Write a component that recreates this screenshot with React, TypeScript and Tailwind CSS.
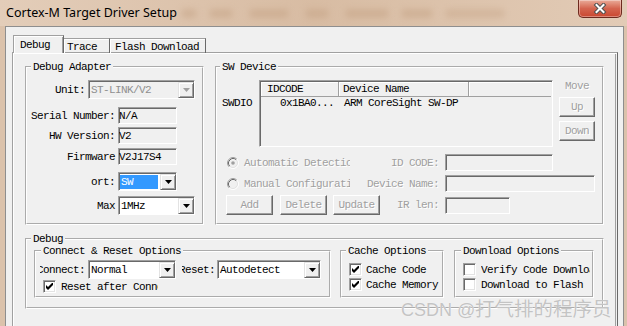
import React from "react";

const T = "font-['Liberation_Mono',monospace] text-[11px] leading-[12px] tracking-[-0.6px]";
const DIS = "text-[#a0a0a0] [text-shadow:1px_1px_0_#ffffff]";
const SUNK =
  "border border-t-[#a0a0a0] border-l-[#a0a0a0] border-b-white border-r-white shadow-[inset_1px_1px_0_#696969]";
const FS = "border-2 border-white [--tw-border-style:groove] [border-style:groove] m-0 p-0 min-w-0";

function Edit({ cls, text }: { cls: string; text?: string }) {
  return (
    <div
      className={`${cls} h-[17px] shrink-0 bg-[#f0f0f0] ${SUNK} flex items-center text-black whitespace-nowrap overflow-hidden`}
    >
      {text}
    </div>
  );
}

function Tri({ color }: { color: string }) {
  return (
    <svg width="7" height="4" viewBox="0 0 7 4">
      <polygon points="0,0 7,0 3.5,4" fill={color} />
    </svg>
  );
}

function Combo({ cls, text, sel, dis }: { cls: string; text: string; sel?: boolean; dis?: boolean }) {
  return (
    <div
      className={`${cls} h-[19px] shrink-0 flex ${SUNK} pt-px pl-px ${dis ? "bg-[#f0f0f0]" : "bg-white"}`}
    >
      <div className="flex-1 min-w-0 flex items-center overflow-hidden whitespace-nowrap">
        {sel ? (
          <span className="bg-[#3399ff] text-white h-[14px] w-[38px] flex items-center pl-px">{text}</span>
        ) : (
          <span className={dis ? "text-[#8f8f8f] pl-px" : "text-black pl-px"}>{text}</span>
        )}
      </div>
      <div className="w-[16px] h-[16px] shrink-0 bg-[#f0f0f0] border border-t-[#e3e3e3] border-l-[#e3e3e3] border-b-[#696969] border-r-[#696969] shadow-[inset_1px_1px_0_#ffffff,inset_-1px_-1px_0_#a0a0a0] flex items-center justify-center">
        <Tri color={dis ? "#a0a0a0" : "#000000"} />
      </div>
    </div>
  );
}

function Check({ on, cls }: { on?: boolean; cls: string }) {
  return (
    <div
      className={`${cls} w-[13px] h-[13px] shrink-0 bg-white border border-t-[#a0a0a0] border-l-[#a0a0a0] border-b-white border-r-white shadow-[inset_1px_1px_0_#696969,inset_-1px_-1px_0_#e3e3e3] flex items-center justify-center`}
    >
      {on && (
        <svg width="7" height="7" viewBox="0 0 7 7">
          <polygon points="0,2 2,4 7,-1 7,2 2,7 0,5" fill="#000000" />
        </svg>
      )}
    </div>
  );
}

function Radio({ on }: { on?: boolean }) {
  return (
    <svg width="12" height="12" viewBox="0 0 12 12" className="shrink-0">
      <circle cx="6" cy="6" r="4.2" fill="#f0f0f0" />
      <path d="M2.11 9.89 A5.5 5.5 0 0 1 9.89 2.11" stroke="#a0a0a0" strokeWidth="1" fill="none" />
      <path d="M9.89 2.11 A5.5 5.5 0 0 1 2.11 9.89" stroke="#ffffff" strokeWidth="1" fill="none" />
      <path d="M2.82 9.18 A4.5 4.5 0 0 1 9.18 2.82" stroke="#696969" strokeWidth="1" fill="none" />
      <path d="M9.18 2.82 A4.5 4.5 0 0 1 2.82 9.18" stroke="#e3e3e3" strokeWidth="1" fill="none" />
      {on && <circle cx="6" cy="6" r="1.8" fill="#a0a0a0" />}
    </svg>
  );
}

function Btn({ cls, children }: { cls: string; children: React.ReactNode }) {
  return (
    <div
      className={`${cls} h-[20px] shrink-0 flex items-center justify-center bg-[#f0f0f0] border border-t-white border-l-white border-b-[#696969] border-r-[#696969] shadow-[inset_-1px_-1px_0_#a0a0a0] ${DIS}`}
    >
      {children}
    </div>
  );
}

function Row({ mt, label, children }: { mt: string; label: string; children: React.ReactNode }) {
  return (
    <div className={`flex items-center ${mt}`}>
      <div className="w-[88px] text-right whitespace-nowrap">{label}</div>
      <div className="ml-[3px]">{children}</div>
    </div>
  );
}

export default function App() {
  return (
    <div className={`relative w-[627px] h-[326px] overflow-hidden bg-[#dbc2ab] flex flex-col text-black ${T}`}>
      {/* title bar */}
      <div className="h-[26px] shrink-0 flex items-start bg-linear-to-r from-[#e3cdb9] via-[#d8bca3] to-[#e2cbb6]">
        <div className="w-[181px] shrink-0 pl-[6px] mt-[5px] font-['Noto_Sans',sans-serif] text-[12.5px] leading-[16px] tracking-normal text-black whitespace-nowrap">
          Cortex-M Target Driver Setup
        </div>
        <div className="flex mt-[9px]">
          <div className="w-[16px] h-[9px] rounded-full bg-[#c4a284] opacity-50 blur-[3px]" />
          <div className="ml-[12px] w-[24px] h-[9px] rounded-full bg-[#c4a284] opacity-50 blur-[3px]" />
          <div className="ml-[16px] w-[40px] h-[9px] rounded-full bg-[#c4a284] opacity-50 blur-[3px]" />
          <div className="ml-[16px] w-[24px] h-[9px] rounded-full bg-[#c4a284] opacity-50 blur-[3px]" />
          <div className="ml-[16px] w-[44px] h-[9px] rounded-full bg-[#c4a284] opacity-50 blur-[3px]" />
          <div className="ml-[12px] w-[32px] h-[9px] rounded-full bg-[#c4a284] opacity-50 blur-[3px]" />
          <div className="ml-[12px] w-[60px] h-[9px] rounded-full bg-[#c4a284] opacity-40 blur-[3px]" />
        </div>
        <div className="ml-auto mr-[5px] w-[44px] h-[18px] rounded-b-[5px] border border-t-0 border-[#6e2a1e] bg-linear-to-b from-[#e9ab99] via-[#d4644f] to-[#c9462f] shadow-[inset_0_0_0_1px_rgba(255,255,255,0.35)] flex items-center justify-center">
          <svg width="14" height="11" viewBox="0 0 14 11">
            <path d="M3.5 2 L10.5 9 M10.5 2 L3.5 9" stroke="#505050" strokeWidth="4" strokeLinecap="square" fill="none" />
            <path d="M3.5 2 L10.5 9 M10.5 2 L3.5 9" stroke="#ffffff" strokeWidth="2" strokeLinecap="square" fill="none" />
          </svg>
        </div>
      </div>

      {/* window body */}
      <div className="ml-[5px] w-[619px] flex-1 min-h-0 bg-[#f0f0f0] border-l border-t border-r border-[#8e8e8e] flex flex-col">
        {/* tabs */}
        <div className="relative z-10 -mb-px mt-[8px] ml-[7px] h-[18px] flex items-end">
          <div className="w-[51px] h-[18px] bg-[#f0f0f0] border-l border-t border-r border-l-[#a0a0a0] border-t-[#a0a0a0] border-r-[#696969] shadow-[inset_1px_1px_0_#ffffff,inset_-1px_0_0_#a0a0a0] pl-[6px] pt-[3px]">
            Debug
          </div>
          <div className="w-[46px] h-[15px] border-t border-r border-t-[#a0a0a0] border-r-[#696969] shadow-[inset_1px_1px_0_#ffffff] pl-[3px] pt-[2px]">
            Trace
          </div>
          <div className="w-[96px] h-[15px] border-t border-r border-t-[#a0a0a0] border-r-[#696969] shadow-[inset_1px_1px_0_#ffffff] pl-[5px] pt-[2px] whitespace-nowrap">
            Flash Download
          </div>
        </div>

        {/* tab page */}
        <div className="ml-[6px] w-[606px] flex-1 border-l border-t border-r border-l-[#a0a0a0] border-t-[#a0a0a0] border-r-[#696969] shadow-[inset_1px_1px_0_#ffffff,inset_-1px_0_0_#f0f0f0,inset_-2px_0_0_#a0a0a0] pl-[12px] pt-[8px]">
          <div className="flex gap-[11px]">
            {/* Debug Adapter */}
            <fieldset className={`w-[179px] h-[164px] ${FS}`}>
              <legend className="ml-[4px] px-[2px]">Debug Adapter</legend>
              <div className="pt-[7px] flex flex-col">
                <div className="flex items-center h-[19px]">
                  <div className="w-[58px] text-right">Unit:</div>
                  <Combo cls="ml-[3px] w-[107px]" text="ST-LINK/V2" dis />
                </div>
                <Row mt="mt-[8px]" label="Serial Number:">
                  <Edit cls="w-[59px]" text="N/A" />
                </Row>
                <Row mt="mt-[3px]" label="HW Version:">
                  <Edit cls="w-[59px]" text="V2" />
                </Row>
                <Row mt="mt-[4px]" label="Firmware">
                  <Edit cls="w-[59px]" text="V2J17S4" />
                </Row>
                <Row mt="mt-[7px]" label="ort:">
                  <Combo cls="w-[59px]" text="SW" sel />
                </Row>
                <Row mt="mt-[5px]" label="Max">
                  <Combo cls="w-[77px]" text="1MHz" />
                </Row>
              </div>
            </fieldset>

            {/* SW Device */}
            <fieldset className={`w-[389px] h-[164px] ${FS}`}>
              <legend className="ml-[3px] px-[2px]">SW Device</legend>
              <div className="pt-[7px]">
                <div className="flex items-start h-[67px]">
                  <div className="ml-[5px] mt-[17px] w-[30px]">SWDIO</div>
                  <div className={`ml-[7px] w-[294px] h-[67px] bg-[#f0f0f0] ${SUNK} p-px flex flex-col`}>
                    <div className="flex h-[15px]">
                      <div className="w-[78px] border-r border-b border-[#a0a0a0] shadow-[inset_1px_1px_0_#ffffff] pl-[6px] flex items-center">
                        IDCODE
                      </div>
                      <div className="w-[130px] border-r border-b border-[#a0a0a0] shadow-[inset_1px_1px_0_#ffffff] pl-[4px] flex items-center whitespace-nowrap">
                        Device Name
                      </div>
                      <div className="flex-1 border-b border-[#a0a0a0] shadow-[inset_1px_1px_0_#ffffff]" />
                    </div>
                    <div className="flex whitespace-nowrap">
                      <div className="w-[78px] pl-[19px]">0x1BA0...</div>
                      <div className="pl-[5px]">ARM CoreSight SW-DP</div>
                    </div>
                  </div>
                  <div className="ml-[6px] w-[36px] flex flex-col">
                    <div className={`text-center ${DIS}`}>Move</div>
                    <Btn cls="mt-[5px] w-[36px]">Up</Btn>
                    <Btn cls="mt-[4px] w-[36px]">Down</Btn>
                  </div>
                </div>

                <div className="mt-[7px] flex items-center h-[17px]">
                  <div className="w-[222px] flex items-center">
                    <div className="ml-[10px] w-[123px] flex items-center overflow-hidden whitespace-nowrap">
                      <Radio on />
                      <span className={`ml-[5px] ${DIS}`}>Automatic Detection</span>
                    </div>
                    <div className={`ml-auto whitespace-nowrap ${DIS}`}>ID CODE:</div>
                  </div>
                  <Edit cls="ml-[6px] w-[108px]" />
                </div>
                <div className="mt-[4px] flex items-center h-[17px]">
                  <div className="w-[222px] flex items-center">
                    <div className="ml-[10px] w-[123px] flex items-center overflow-hidden whitespace-nowrap">
                      <Radio />
                      <span className={`ml-[5px] ${DIS}`}>Manual Configuration</span>
                    </div>
                    <div className={`ml-auto whitespace-nowrap ${DIS}`}>Device Name:</div>
                  </div>
                  <Edit cls="ml-[6px] w-[150px]" />
                </div>
                <div className="mt-[3px] flex items-center h-[20px]">
                  <div className="w-[222px] flex items-center">
                    <Btn cls="ml-[9px] w-[47px]">Add</Btn>
                    <Btn cls="ml-[7px] w-[47px]">Delete</Btn>
                    <Btn cls="ml-[6px] w-[47px]">Update</Btn>
                    <div className={`ml-auto whitespace-nowrap ${DIS}`}>IR len:</div>
                  </div>
                  <Edit cls="ml-[6px] w-[65px]" />
                </div>
              </div>
            </fieldset>
          </div>

          {/* Debug bottom group */}
          <fieldset className={`mt-[8px] w-[579px] ${FS}`}>
            <legend className="ml-[4px] px-[2px]">Debug</legend>
            <div className="pl-[7px] pb-[9px] flex items-start">
              <fieldset className={`w-[297px] h-[53px] ${FS}`}>
                <legend className="ml-[5px] px-[2px] whitespace-nowrap">Connect &amp; Reset Options</legend>
                <div className="pt-[3px]">
                  <div className="flex items-center h-[19px]">
                    <div className="ml-[4px] w-[45px] flex justify-end overflow-hidden whitespace-nowrap">
                      <span className="shrink-0">Connect:</span>
                    </div>
                    <Combo cls="ml-[3px] w-[88px]" text="Normal" />
                    <div className="ml-[6px] w-[33px] flex justify-end overflow-hidden whitespace-nowrap">
                      <span className="shrink-0">Reset:</span>
                    </div>
                    <Combo cls="ml-[2px] w-[104px]" text="Autodetect" />
                  </div>
                  <div className="mt-[1px] flex items-center h-[13px]">
                    <Check on cls="ml-[7px]" />
                    <span className="ml-[5px] w-[97px] overflow-hidden whitespace-nowrap">Reset after Connect</span>
                  </div>
                </div>
              </fieldset>

              <fieldset className={`ml-[9px] w-[104px] h-[53px] ${FS}`}>
                <legend className="ml-[4px] px-[2px] whitespace-nowrap">Cache Options</legend>
                <div className="pt-[6px]">
                  <div className="flex items-center h-[13px]">
                    <Check on cls="ml-[7px]" />
                    <span className="ml-[4px] whitespace-nowrap">Cache Code</span>
                  </div>
                  <div className="mt-[2px] flex items-center h-[13px]">
                    <Check on cls="ml-[7px]" />
                    <span className="ml-[4px] whitespace-nowrap">Cache Memory</span>
                  </div>
                </div>
              </fieldset>

              <fieldset className={`ml-[10px] w-[140px] h-[53px] ${FS}`}>
                <legend className="ml-[5px] px-[2px] whitespace-nowrap">Download Options</legend>
                <div className="pt-[6px]">
                  <div className="flex items-center h-[13px]">
                    <Check cls="ml-[7px]" />
                    <span className="ml-[5px] w-[109px] overflow-hidden whitespace-nowrap">Verify Code Download</span>
                  </div>
                  <div className="mt-[2px] flex items-center h-[13px]">
                    <Check cls="ml-[7px]" />
                    <span className="ml-[5px] whitespace-nowrap">Download to Flash</span>
                  </div>
                </div>
              </fieldset>
            </div>
          </fieldset>
        </div>
      </div>

      {/* watermark */}
      <div className="absolute left-[401px] top-[296px] flex items-baseline tracking-normal text-[#c4c4c4] whitespace-nowrap [text-shadow:0_0_1px_#ffffff]">
        <span className="w-[74px] font-['Liberation_Sans',sans-serif] text-[18px] leading-[24px]">CSDN @</span>
        <span className="font-['Noto_Sans_CJK_SC',sans-serif] text-[19.5px] leading-[24px]">打气排的程序员</span>
      </div>
    </div>
  );
}
